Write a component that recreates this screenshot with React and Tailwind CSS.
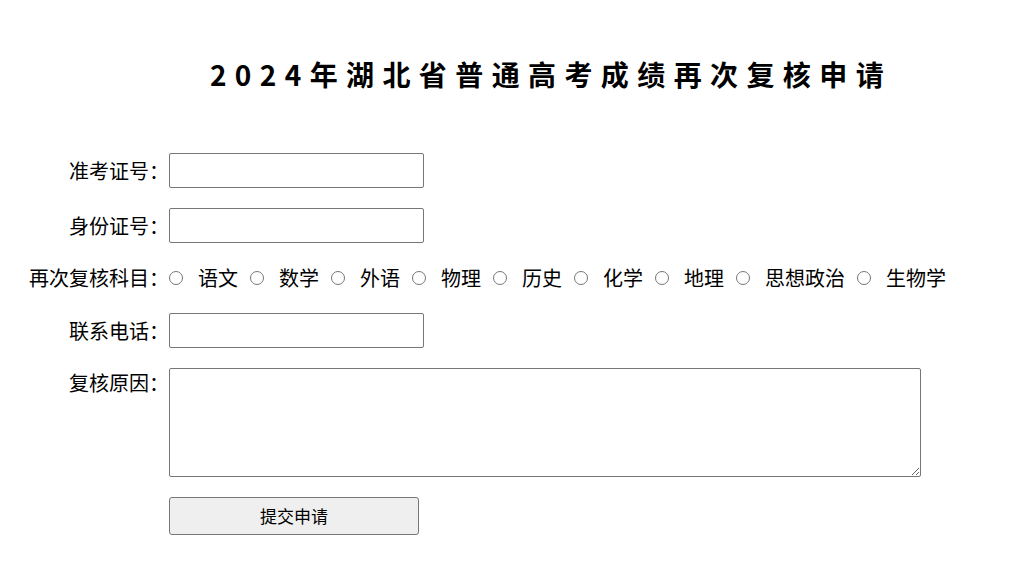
import React from 'react';

const subjects = ['语文', '数学', '外语', '物理', '历史', '化学', '地理', '思想政治', '生物学'];

function Field({ label, children, top }) {
  return (
    <div className={`grid grid-cols-[169px_1fr] ${top ? 'items-start' : 'items-center'}`}>
      <label className="text-[20px] leading-[30px] text-right text-black">{label}</label>
      {children}
    </div>
  );
}

export default function App() {
  return (
    <div className="min-h-screen bg-white text-black font-['Noto_Sans_CJK_SC','Noto_Sans',sans-serif]">
      <h1 className="pt-[54px] pl-[74px] text-center text-[28px] leading-[40px] font-bold tracking-[8.4px]">
        2024年湖北省普通高考成绩再次复核申请
      </h1>

      <form className="mt-[59px] flex flex-col gap-[20px]" onSubmit={e => e.preventDefault()}>
        <Field label="准考证号：">
          <input type="text" className="w-[255px] h-[35px] border border-[#767676] rounded-[2px] bg-white px-1" />
        </Field>
        <Field label="身份证号：">
          <input type="text" className="w-[255px] h-[35px] border border-[#767676] rounded-[2px] bg-white px-1" />
        </Field>
        <Field label="再次复核科目：">
          <div className="flex items-center h-[30px]">
            {subjects.map((s, i) => (
              <div key={s} className={`flex items-center ${i > 0 ? 'ml-[12px]' : ''}`}>
                <input type="radio" name="subject" id={`sub-${i}`} className="w-[14px] h-[14px] m-0" />
                <label htmlFor={`sub-${i}`} className="ml-[15px] text-[20px] leading-[30px]">{s}</label>
              </div>
            ))}
          </div>
        </Field>
        <Field label="联系电话：">
          <input type="text" className="w-[255px] h-[35px] border border-[#767676] rounded-[2px] bg-white px-1" />
        </Field>
        <Field label="复核原因：" top>
          <textarea className="w-[752px] h-[109px] border border-[#767676] rounded-[2px] bg-white" />
        </Field>
        <div className="pl-[169px]">
          <button type="submit" className="w-[250px] h-[38px] bg-[#efefef] border border-[#767676] rounded-[3px] text-[17px] text-black">
            提交申请
          </button>
        </div>
      </form>
    </div>
  );
}
